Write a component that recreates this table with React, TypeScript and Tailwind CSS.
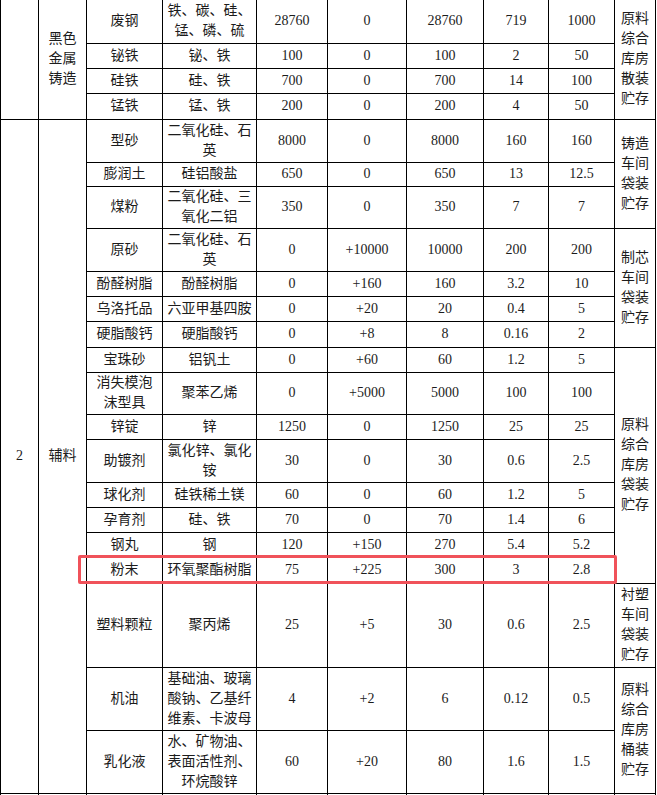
import React from "react";

type Row = {
  h: string;
  name: React.ReactNode;
  comp: React.ReactNode;
  a: string;
  b: string;
  c: string;
  d: string;
  e: string;
};

const rows: Row[] = [
  { h: "h-[43px]", name: "废钢", comp: <>铁、碳、硅、<br />锰、磷、硫</>, a: "28760", b: "0", c: "28760", d: "719", e: "1000" },
  { h: "h-[25px]", name: "铋铁", comp: "铋、铁", a: "100", b: "0", c: "100", d: "2", e: "50" },
  { h: "h-[25px]", name: "硅铁", comp: "硅、铁", a: "700", b: "0", c: "700", d: "14", e: "100" },
  { h: "h-[26px]", name: "锰铁", comp: "锰、铁", a: "200", b: "0", c: "200", d: "4", e: "50" },
  { h: "h-[43px]", name: "型砂", comp: <>二氧化硅、石<br />英</>, a: "8000", b: "0", c: "8000", d: "160", e: "160" },
  { h: "h-[24px]", name: "膨润土", comp: "硅铝酸盐", a: "650", b: "0", c: "650", d: "13", e: "12.5" },
  { h: "h-[42px]", name: "煤粉", comp: <>二氧化硅、三<br />氧化二铝</>, a: "350", b: "0", c: "350", d: "7", e: "7" },
  { h: "h-[43px]", name: "原砂", comp: <>二氧化硅、石<br />英</>, a: "0", b: "+10000", c: "10000", d: "200", e: "200" },
  { h: "h-[25px]", name: "酚醛树脂", comp: "酚醛树脂", a: "0", b: "+160", c: "160", d: "3.2", e: "10" },
  { h: "h-[25px]", name: "乌洛托品", comp: "六亚甲基四胺", a: "0", b: "+20", c: "20", d: "0.4", e: "5" },
  { h: "h-[26px]", name: "硬脂酸钙", comp: "硬脂酸钙", a: "0", b: "+8", c: "8", d: "0.16", e: "2" },
  { h: "h-[25px]", name: "宝珠砂", comp: "铝钒土", a: "0", b: "+60", c: "60", d: "1.2", e: "5" },
  { h: "h-[42px]", name: <>消失模泡<br />沫型具</>, comp: "聚苯乙烯", a: "0", b: "+5000", c: "5000", d: "100", e: "100" },
  { h: "h-[25px]", name: "锌锭", comp: "锌", a: "1250", b: "0", c: "1250", d: "25", e: "25" },
  { h: "h-[43px]", name: "助镀剂", comp: <>氯化锌、氯化<br />铵</>, a: "30", b: "0", c: "30", d: "0.6", e: "2.5" },
  { h: "h-[25px]", name: "球化剂", comp: "硅铁稀土镁", a: "60", b: "0", c: "60", d: "1.2", e: "5" },
  { h: "h-[25px]", name: "孕育剂", comp: "硅、铁", a: "70", b: "0", c: "70", d: "1.4", e: "6" },
  { h: "h-[25px]", name: "钢丸", comp: "钢", a: "120", b: "+150", c: "270", d: "5.4", e: "5.2" },
  { h: "h-[26px]", name: "粉末", comp: "环氧聚酯树脂", a: "75", b: "+225", c: "300", d: "3", e: "2.8" },
  { h: "h-[84px]", name: "塑料颗粒", comp: "聚丙烯", a: "25", b: "+5", c: "30", d: "0.6", e: "2.5" },
  { h: "h-[63px]", name: "机油", comp: <>基础油、玻璃<br />酸钠、乙基纤<br />维素、卡波母</>, a: "4", b: "+2", c: "6", d: "0.12", e: "0.5" },
  { h: "h-[63px]", name: "乳化液", comp: <>水、矿物油、<br />表面活性剂、<br />环烷酸锌</>, a: "60", b: "+20", c: "80", d: "1.6", e: "1.5" },
];

const storage: Record<number, { span: number; lines: string[] }> = {
  0: { span: 4, lines: ["原料", "综合", "库房", "散装", "贮存"] },
  4: { span: 3, lines: ["铸造", "车间", "袋装", "贮存"] },
  7: { span: 4, lines: ["制芯", "车间", "袋装", "贮存"] },
  11: { span: 8, lines: ["原料", "综合", "库房", "袋装", "贮存"] },
  19: { span: 1, lines: ["衬塑", "车间", "袋装", "贮存"] },
  20: { span: 2, lines: ["原料", "综合", "库房", "桶装", "贮存"] },
};

const cell = "border border-black p-0 text-center align-middle leading-[20px]";

export default function App() {
  return (
    <div
      className="relative w-[657px] h-[795px] overflow-hidden bg-white text-[14px] text-[#1c1c1c]"
      style={{ fontFamily: '"Liberation Serif", "Noto Sans CJK SC", serif' }}
    >
      <table className="table-fixed border-collapse w-[655px]">
        <colgroup>
          <col className="w-[38px]" />
          <col className="w-[48px]" />
          <col className="w-[76px]" />
          <col className="w-[94px]" />
          <col className="w-[71px]" />
          <col className="w-[79px]" />
          <col className="w-[77px]" />
          <col className="w-[65px]" />
          <col className="w-[66px]" />
          <col className="w-[41px]" />
        </colgroup>
        <tbody>
          {rows.map((r, i) => {
            const top = i === 0 ? " border-t-0" : "";
            const st = storage[i];
            return (
              <tr key={i} className={r.h}>
                {i === 0 && (
                  <>
                    <td rowSpan={4} className={cell + top}></td>
                    <td rowSpan={4} className={cell + top}>
                      黑色<br />金属<br />铸造
                    </td>
                  </>
                )}
                {i === 4 && (
                  <>
                    <td rowSpan={18} className={cell}>2</td>
                    <td rowSpan={18} className={cell}>辅料</td>
                  </>
                )}
                <td className={cell + top}>{r.name}</td>
                <td className={cell + top}>{r.comp}</td>
                <td className={cell + top}>{r.a}</td>
                <td className={cell + top}>{r.b}</td>
                <td className={cell + top}>{r.c}</td>
                <td className={cell + top}>{r.d}</td>
                <td className={cell + top}>{r.e}</td>
                {st && (
                  <td rowSpan={st.span} className={cell + top + " leading-[20.5px]"}>
                    {st.lines.map((l, k) => (
                      <div key={k}>{l}</div>
                    ))}
                  </td>
                )}
              </tr>
            );
          })}
          <tr className="h-[20px]">
            {Array.from({ length: 10 }).map((_, k) => (
              <td key={k} className={cell}></td>
            ))}
          </tr>
        </tbody>
      </table>
      <div className="absolute left-[78px] top-[555px] w-[539px] h-[29px] border-[3px] border-[#f0525a] rounded-[2px] pointer-events-none" />
    </div>
  );
}
